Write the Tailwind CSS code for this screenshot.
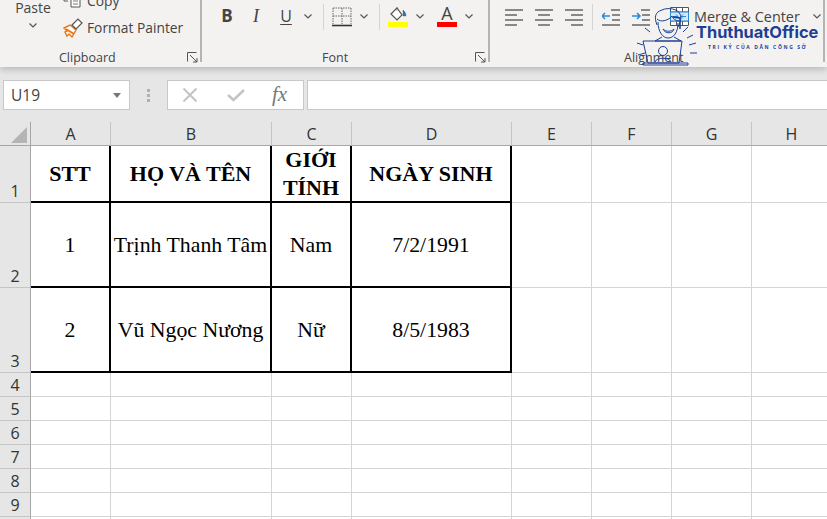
<!DOCTYPE html>
<html lang="en">
  <head>
    <meta charset="UTF-8" />
    <title>Excel sheet</title>
    <script src="https://cdn.jsdelivr.net/npm/@tailwindcss/browser@4"></script>
  </head>
  <body class="relative w-[827px] h-[519px] overflow-hidden bg-[#e6e6e6] font-['Open_Sans',sans-serif] text-[#444]">
    <!-- Ribbon -->
    <div class="relative z-10 flex h-[67px] bg-[#f3f2f1] shadow-[0_3px_6px_rgba(0,0,0,0.18)] overflow-hidden">
      <!-- Clipboard -->
      <div class="relative w-[202px] shrink-0 border-r-2 border-[#b4b4b4] my-0 h-[62px]">
        <div class="flex">
          <div class="w-[66px] flex flex-col items-center -mt-[1px] -mr-[3px]">
            <span class="text-[14px] leading-[18px]">Paste</span>
            <svg class="mt-[6px]" width="8" height="5" viewBox="0 0 8 5"><path d="M0.5 0.5 4 4 7.5 0.5" fill="none" stroke="#555" stroke-width="1.2"/></svg>
          </div>
          <div class="flex flex-col -mt-[9px]">
            <div class="flex items-center h-[20px]">
              <svg width="20" height="16" viewBox="0 0 20 16" class="-mt-[2px]"><path d="M1 1V9H5M8 6H17V15H8Z" fill="#fff" stroke="#555"/><path d="M10 9H15M10 12H15" stroke="#777"/></svg>
              <span class="ml-[4px] text-[13.8px]">Copy</span>
            </div>
            <div class="flex items-center h-[20px] mt-[7px]">
              <svg width="20" height="20" viewBox="0 0 20 20"><path d="M1 10 7 7 13 12 9 19 6 16 4 18 2 14 4 13Z" fill="#fff" stroke="#e8771a" stroke-width="1.4"/><path d="M3 11 11 16" stroke="#e8771a" stroke-width="2"/><path d="M9 7 15 1 19 5 13 11Z" fill="#fff" stroke="#555" stroke-width="1.2"/></svg>
              <span class="ml-[4px] text-[13.8px] leading-[20px]">Format Painter</span>
            </div>
          </div>
        </div>
        <span class="absolute left-[59px] top-[49px] text-[12.5px] leading-[17px]">Clipboard</span>
        <svg class="absolute left-[187px] top-[52px]" width="11" height="11" viewBox="0 0 11 11"><path d="M9.5 0.5H0.5V9.5M3 3 10 10M10 6V10H6" fill="none" stroke="#555"/></svg>
      </div>

      <!-- Font -->
      <div class="relative w-[288px] shrink-0 border-r-2 border-[#b4b4b4] h-[62px]">
        <div class="flex items-center h-[32px] pt-[1px]">
          <span class="w-[16px] ml-[17px] -mt-[2px] text-center font-bold text-[17px] leading-[20px] text-[#444]">B</span>
          <span class="w-[16px] ml-[13px] -mt-[2px] text-center italic text-[18px] leading-[20px] font-['Liberation_Serif']">I</span>
          <span class="w-[16px] ml-[14px] -mt-[2px] text-center underline underline-offset-2 text-[16px] leading-[20px]">U</span>
          <svg class="ml-[10px]" width="8" height="5" viewBox="0 0 8 5"><path d="M0.5 0.5 4 4 7.5 0.5" fill="none" stroke="#555" stroke-width="1.2"/></svg>
          <div class="w-px h-[26px] bg-[#d4d4d4] ml-[11px]"></div>
          <svg class="ml-[8px]" width="20" height="20" viewBox="0 0 20 20"><path d="M1 1H19M1 1V17M19 1V17M10 1V17M1 9H19" fill="none" stroke="#666" stroke-dasharray="1.5 1"/><path d="M0 18.5H20" stroke="#333" stroke-width="1.6"/></svg>
          <svg class="ml-[8px]" width="8" height="5" viewBox="0 0 8 5"><path d="M0.5 0.5 4 4 7.5 0.5" fill="none" stroke="#555" stroke-width="1.2"/></svg>
          <div class="w-px h-[26px] bg-[#d4d4d4] ml-[11px]"></div>
          <div class="ml-[8px] w-[20px] flex flex-col items-center">
            <svg width="20" height="15" viewBox="0 0 20 15"><path d="M3 8 9 2 14 9 9 14Z" fill="#fff" stroke="#555" stroke-width="1.2"/><path d="M9 1V5M15 4C17 6 18 7 18 10H15Z" fill="#2a75b8" stroke="#555" stroke-width="0.4"/></svg>
            <div class="w-[20px] h-[5px] bg-[#ffff00] mt-[1px]"></div>
          </div>
          <svg class="ml-[8px]" width="8" height="5" viewBox="0 0 8 5"><path d="M0.5 0.5 4 4 7.5 0.5" fill="none" stroke="#555" stroke-width="1.2"/></svg>
          <div class="ml-[13px] w-[20px] flex flex-col items-center">
            <span class="text-[18px] leading-[15px] h-[15px]">A</span>
            <div class="w-[20px] h-[5px] bg-[#ff0000] mt-[1px]"></div>
          </div>
          <svg class="ml-[8px]" width="8" height="5" viewBox="0 0 8 5"><path d="M0.5 0.5 4 4 7.5 0.5" fill="none" stroke="#555" stroke-width="1.2"/></svg>
        </div>
        <span class="absolute left-[120px] top-[49px] text-[12.5px] leading-[17px]">Font</span>
        <svg class="absolute left-[273px] top-[52px]" width="11" height="11" viewBox="0 0 11 11"><path d="M9.5 0.5H0.5V9.5M3 3 10 10M10 6V10H6" fill="none" stroke="#555"/></svg>
      </div>

      <!-- Alignment -->
      <div class="relative w-[333px] shrink-0 h-[62px]">
        <div class="flex items-center h-[32px] pt-[1px]">
          <svg class="ml-[15px]" width="18" height="18" viewBox="0 0 18 18"><path d="M0 2H18M0 7H12M0 12H18M0 17H12" stroke="#666" stroke-width="1.5"/></svg>
          <svg class="ml-[12px]" width="18" height="18" viewBox="0 0 18 18"><path d="M0 2H18M3 7H15M0 12H18M3 17H15" stroke="#666" stroke-width="1.5"/></svg>
          <svg class="ml-[12px]" width="18" height="18" viewBox="0 0 18 18"><path d="M0 2H18M6 7H18M0 12H18M6 17H18" stroke="#666" stroke-width="1.5"/></svg>
          <div class="w-px h-[26px] bg-[#d4d4d4] ml-[9px]"></div>
          <svg class="ml-[9px]" width="18" height="18" viewBox="0 0 18 18"><path d="M9 2H18M10 7H18M10 12H18M0 17H18" stroke="#666" stroke-width="1.5"/><path d="M0 8H8M3 5 0 8 3 11" fill="none" stroke="#2a8ad6" stroke-width="1.5"/></svg>
          <svg class="ml-[12px]" width="18" height="18" viewBox="0 0 18 18"><path d="M9 2H18M10 7H18M10 12H18M0 17H18" stroke="#666" stroke-width="1.5"/><path d="M0 8H8M5 5 8 8 5 11" fill="none" stroke="#2a8ad6" stroke-width="1.5"/></svg>
          <svg class="ml-[20px]" width="19" height="19" viewBox="0 0 19 19"><path d="M0.5 0.5H18.5V18.5H0.5ZM0.5 5H18.5M0.5 14H18.5M6.5 0.5V5M12.5 0.5V5M6.5 14V18.5M12.5 14V18.5" fill="#fff" stroke="#555"/><path d="M0.5 5H18.5V14H0.5Z" fill="#d5e8f7" stroke="#2a8ad6"/><path d="M3 9.5H8M6 7.5 8 9.5 6 11.5M16 9.5H11M13 7.5 11 9.5 13 11.5" fill="none" stroke="#2a8ad6"/></svg>
          <span class="ml-[5px] text-[14.4px] whitespace-nowrap">Merge &amp; Center</span>
          <svg class="ml-[13px]" width="8" height="5" viewBox="0 0 8 5"><path d="M0.5 0.5 4 4 7.5 0.5" fill="none" stroke="#555" stroke-width="1.2"/></svg>
        </div>
        <span class="absolute left-[134px] top-[49px] text-[12.5px] leading-[17px]">Alignment</span>
      </div>
      <div class="w-[2px] h-[62px] bg-[#b4b4b4] shrink-0"></div>
    </div>

    <!-- Formula bar -->
    <div class="flex items-center h-[30px] mt-[13px] pl-[3px] text-[#666]">
      <div class="flex items-center justify-between w-[127px] h-[30px] shrink-0 bg-white border border-[#c8c8c8] pl-[7px] pr-[8px]">
        <span class="mt-[1px] text-[15.5px] text-[#444]">U19</span>
        <svg width="8" height="5" viewBox="0 0 8 5"><path d="M0 0H8L4 5Z" fill="#777"/></svg>
      </div>
      <div class="flex flex-col gap-[2px] ml-[17px] shrink-0">
        <div class="w-[3px] h-[3px] bg-[#b0b0b0]"></div>
        <div class="w-[3px] h-[3px] bg-[#b0b0b0]"></div>
        <div class="w-[3px] h-[3px] bg-[#b0b0b0]"></div>
      </div>
      <div class="flex items-center w-[137px] h-[30px] ml-[17px] shrink-0 bg-white border border-[#c8c8c8]">
        <svg class="ml-[14px]" width="16" height="16" viewBox="0 0 16 16"><path d="M1.5 1.5 14.5 14.5M14.5 1.5 1.5 14.5" stroke="#c4c4c4" stroke-width="2"/></svg>
        <svg class="ml-[29px]" width="18" height="14" viewBox="0 0 18 14"><path d="M1 7 6.5 12 17 2" fill="none" stroke="#c4c4c4" stroke-width="2.5"/></svg>
        <span class="ml-[27px] font-['Liberation_Serif'] italic text-[21px] text-[#777]">fx</span>
      </div>
      <div class="w-[530px] h-[30px] ml-[3px] bg-white border border-[#c8c8c8] shrink-0"></div>
    </div>

    <!-- Sheet -->
    <div class="mt-[12px] grid grid-cols-[31px_80px_161px_80px_160px_80px_80px_80px_80px] grid-rows-[24px_57px_85px_85px_24px_24px_24px_24px_24px_24px_3px] bg-white" id="sheet"></div>

    <!-- Watermark logo -->
    <div class="absolute z-20 left-[635px] top-[5px] w-[190px] h-[62px]">
      <svg class="absolute left-0 top-0" width="62" height="62" viewBox="0 0 62 62" fill="none" stroke="#1c3f94" stroke-width="1">
        <path d="M22 20C19 12 20 7 27 5 33 2 43 4 45 9 47 13 45 18 43 22"/>
        <path d="M22 14C26 18 34 15 37 11 38 14 41 16 44 16"/>
        <path d="M23 17C23 27 28 33 33 33 39 33 43 27 43 18"/>
        <path d="M28 24C31 27 36 27 39 24 38 29 30 29 28 24Z" fill="#fff"/>
        <path d="M27 32 20 36H46L39 32"/>
        <path d="M8 36H47L44 58H13Z"/>
        <circle cx="28" cy="46" r="4.5"/>
        <path d="M20 57C21 52 35 52 36 57"/>
        <path d="M8 58H53V60H8Z"/>
        <path d="M10 23 15 27M2 38 8 40M3 50 10 48M48 27 53 22M52 33 58 30M54 40 61 38M55 48 62 48"/>
        <path d="M38 12 45 13V24" stroke-width="1.5"/>
      </svg>
      <span class="absolute left-[61px] top-[18px] text-[16.4px] leading-[18px] font-bold font-['Inter'] text-[#1c3f94] whitespace-nowrap">ThuthuatOffice</span>
      <span class="absolute left-[73px] top-[39px] text-[5px] leading-[7px] font-bold tracking-[1.6px] text-[#1c3f94] whitespace-nowrap">TRI KỶ CỦA DÂN CÔNG SỞ</span>
    </div>

    <script>
      const columns = ["A", "B", "C", "D", "E", "F", "G", "H"];
      const rowNumbers = [1, 2, 3, 4, 5, 6, 7, 8, 9, ""];
      const table = [
        ["STT", "HỌ VÀ TÊN", "GIỚI TÍNH", "NGÀY SINH"],
        ["1", "Trịnh Thanh Tâm", "Nam", "7/2/1991"],
        ["2", "Vũ Ngọc Nương", "Nữ", "8/5/1983"],
      ];
      const sheet = document.getElementById("sheet");

      function addCell(className, text) {
        const cell = document.createElement("div");
        cell.className = className;
        if (text) cell.textContent = text;
        sheet.appendChild(cell);
      }

      addCell("relative bg-[#e6e6e6] border-r border-b border-[#a6a6a6]");
      sheet.lastChild.innerHTML = '<svg class="absolute left-[11px] top-[5px]" width="16" height="16" viewBox="0 0 16 16"><path d="M16 0V16H0Z" fill="#b4b4b4"/></svg>';
      columns.forEach((name) => {
        addCell("flex items-center justify-center bg-[#e6e6e6] border-r border-b border-r-[#c4c4c4] border-b-[#a6a6a6] text-[16px] text-[#333]", name);
      });

      rowNumbers.forEach((num, r) => {
        addCell("flex items-end justify-center pb-[1px] bg-[#e6e6e6] border-r border-b border-r-[#a6a6a6] border-b-[#c4c4c4] text-[16px] leading-[20px] text-[#333]", String(num));
        columns.forEach((_, c) => {
          const inTable = r < 3 && c < 4;
          if (inTable) {
            const weight = r === 0
              ? "font-bold text-[22px] leading-[28px]"
              : "text-[21.8px] leading-[28px]";
            addCell("flex items-center justify-center text-center text-black font-['Liberation_Serif'] border-r-2 border-b-2 border-black " + weight, table[r][c]);
          } else {
            addCell("border-r border-b border-[#d4d4d4]");
          }
        });
      });
    </script>
  </body>
</html>
